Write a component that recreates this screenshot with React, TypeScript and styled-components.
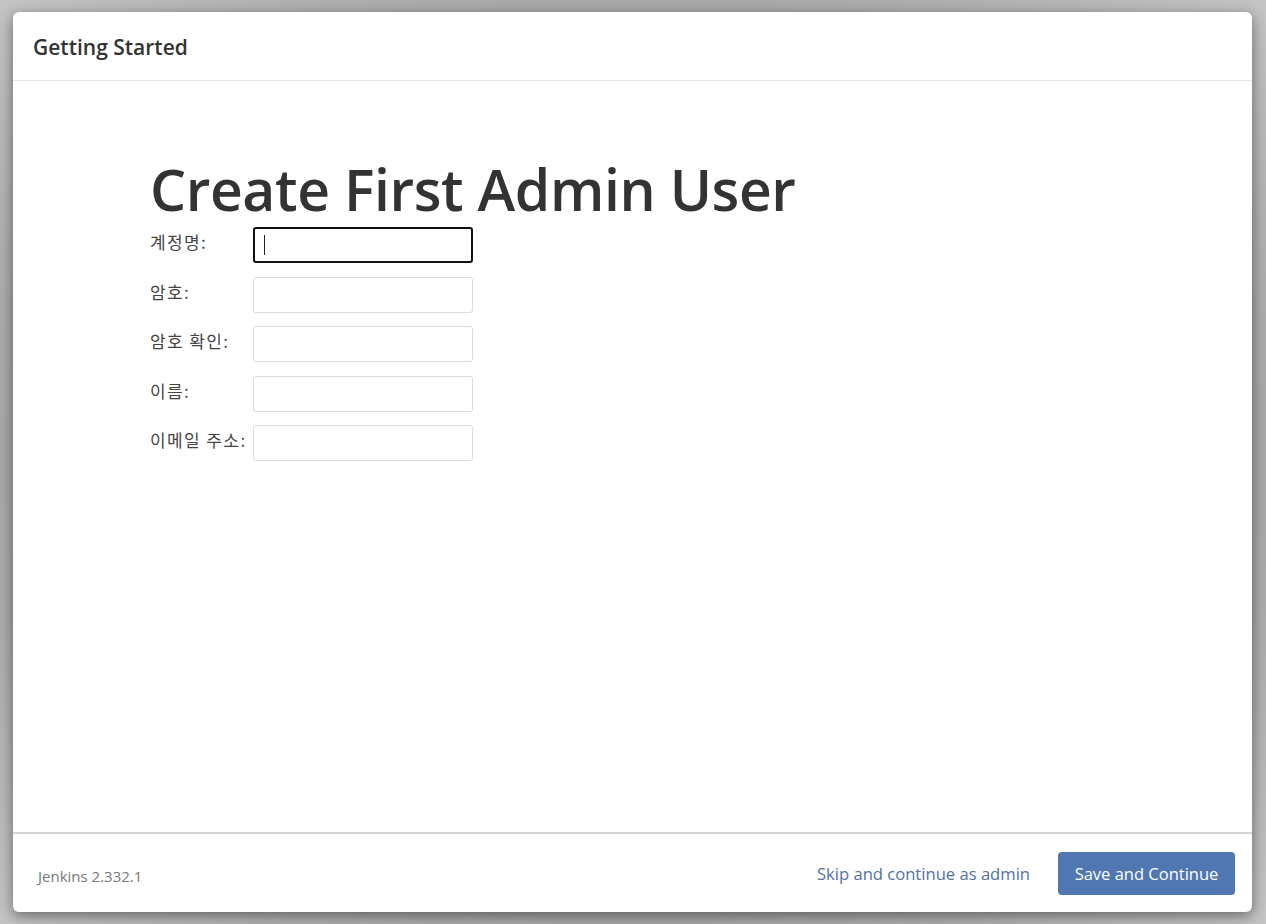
import { Fragment } from 'react';
import styled, { createGlobalStyle } from 'styled-components';

const GlobalStyle = createGlobalStyle`
  html, body {
    margin: 0;
    padding: 0;
    background: #b9b9b9;
  }
  body {
    font-family: "Open Sans", "Noto Sans CJK KR", sans-serif;
    color: #333;
  }
`;

const Backdrop = styled.div`
  width: 1266px;
  height: 924px;
  box-sizing: border-box;
  padding: 12px 14px 12px 13px;
  background: radial-gradient(ellipse at center, #9a9a9a 0%, #a8a8a8 70%, #c4c4c4 100%);
`;

const Dialog = styled.div`
  height: 100%;
  background: #fff;
  border-radius: 6px;
  box-shadow: 0 4px 14px rgba(0, 0, 0, 0.45);
  display: flex;
  flex-direction: column;
  overflow: hidden;
`;

const Header = styled.header`
  height: 68px;
  flex: none;
  display: flex;
  align-items: center;
  padding: 0 20px;
  border-bottom: 1px solid #e5e5e5;
`;

const Title = styled.h4`
  margin: 0;
  padding-top: 2px;
  font-size: 21px;
  font-weight: 600;
  color: #333;
`;

const Body = styled.main`
  flex: 1;
  padding: 72px 0 0 137px;
`;

const Heading = styled.h1`
  margin: 0 0 2px;
  font-size: 57px;
  font-weight: 600;
  line-height: 72px;
  color: #333;
  letter-spacing: -0.4px;
`;

const Form = styled.div`
  display: grid;
  grid-template-columns: 103px 220px;
  row-gap: 13.5px;
  align-items: center;
`;

const Label = styled.label`
  font-family: "Noto Sans CJK KR", sans-serif;
  font-size: 17px;
  letter-spacing: 1.4px;
  color: #444;
  white-space: nowrap;
  align-self: start;
  padding-top: 2px;
`;

const Input = styled.div<{ $focused?: boolean }>`
  box-sizing: border-box;
  height: 36px;
  border: ${(p) => (p.$focused ? '2px solid #111' : '1px solid #dcdcdc')};
  border-radius: 3px;
  display: flex;
  align-items: center;
  padding-left: 9px;
`;

const Caret = styled.span`
  width: 1px;
  height: 20px;
  background: #222;
`;

const Footer = styled.footer`
  height: 78px;
  flex: none;
  border-top: 2px solid #d4d4d4;
  display: flex;
  align-items: center;
  padding: 0 17px 0 25px;
  gap: 28px;
`;

const Version = styled.span`
  font-size: 15px;
  color: #777;
  margin-right: auto;
  padding-top: 5px;
`;

const SkipLink = styled.a`
  font-size: 16.6px;
  color: #5371a8;
  text-decoration: none;
`;

const Button = styled.button`
  height: 43px;
  width: 177px;
  padding: 0;
  border: none;
  border-radius: 4px;
  background: #5077b2;
  color: #fff;
  font-family: "Open Sans", sans-serif;
  font-size: 16.5px;
`;

const fields = ['계정명:', '암호:', '암호 확인:', '이름:', '이메일 주소:'];

const App = () => {
  return (
    <>
      <GlobalStyle />
      <Backdrop>
        <Dialog>
          <Header>
            <Title>Getting Started</Title>
          </Header>
          <Body>
            <Heading>Create First Admin User</Heading>
            <Form>
              {fields.map((f, i) => (
                <Fragment key={f}>
                  <Label>{f}</Label>
                  <Input $focused={i === 0}>{i === 0 && <Caret />}</Input>
                </Fragment>
              ))}
            </Form>
          </Body>
          <Footer>
            <Version>Jenkins 2.332.1</Version>
            <SkipLink href="#">Skip and continue as admin</SkipLink>
            <Button>Save and Continue</Button>
          </Footer>
        </Dialog>
      </Backdrop>
    </>
  );
};

export default App;
